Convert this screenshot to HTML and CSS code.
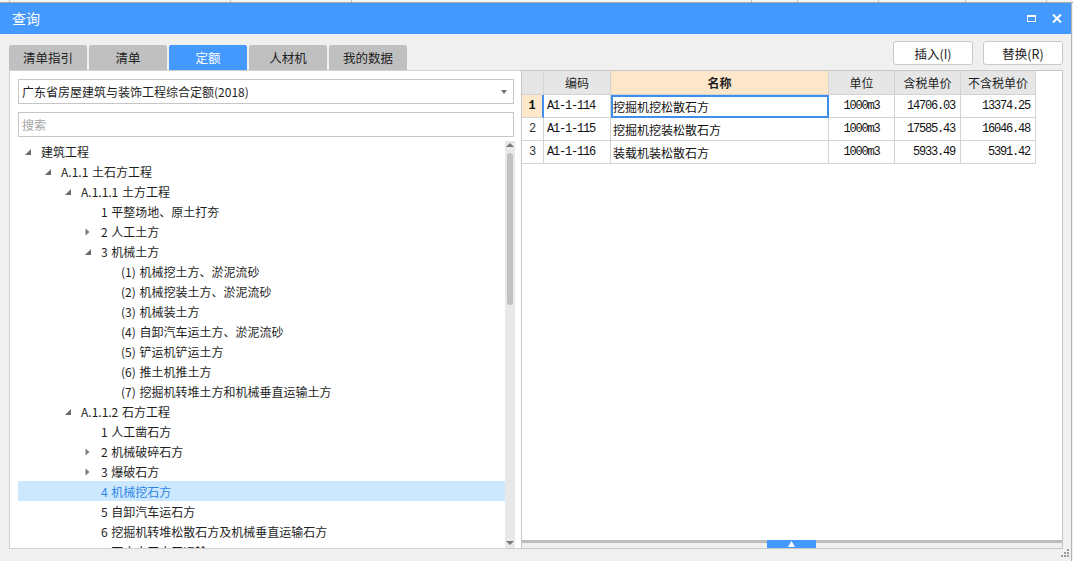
FILE: index.html
```html
<!DOCTYPE html>
<html lang="zh-CN">
<head>
<meta charset="utf-8">
<title>查询</title>
<link rel="stylesheet" href="styles.css">
</head>
<body>
<div class="topstrip">
  <span style="width:10px"></span><span style="width:221px"></span><span style="width:121px"></span><span style="width:400px"></span><span style="width:46px"></span><span style="width:81px"></span><span style="width:87px"></span><span style="width:81px"></span>
</div>
<div class="window">
  <div class="titlebar">
    <div class="title">查询</div>
    <div class="winbtns">
      <span class="maxbtn"></span>
      <svg class="closebtn" width="10" height="9" viewBox="0 0 10 9"><path d="M1 0.5 L9 8.5 M9 0.5 L1 8.5" stroke="#fff" stroke-width="2"/></svg>
    </div>
  </div>
  <div class="toolbar">
    <div class="tabs">
      <div class="tab">清单指引</div>
      <div class="tab">清单</div>
      <div class="tab active">定额</div>
      <div class="tab">人材机</div>
      <div class="tab">我的数据</div>
    </div>
    <div class="actions">
      <div class="btn">插入(I)</div>
      <div class="btn">替换(R)</div>
    </div>
  </div>
  <div class="panes">
    <div class="left">
      <div class="field select"><span class="seltext">广东省房屋建筑与装饰工程综合定额(2018)</span><span class="caret"></span></div>
      <div class="field search">搜索</div>
      <div class="treewrap">
        <div class="tree">
          <div class="row l0"><span class="tw"><svg class="ex" width="6" height="6" viewBox="0 0 6 6"><polygon points="6,0 6,6 0,6" fill="#6a6a6a"/></svg></span><span>建筑工程</span></div>
          <div class="row l1"><span class="tw"><svg class="ex" width="6" height="6" viewBox="0 0 6 6"><polygon points="6,0 6,6 0,6" fill="#6a6a6a"/></svg></span><span>A.1.1 土石方工程</span></div>
          <div class="row l2"><span class="tw"><svg class="ex" width="6" height="6" viewBox="0 0 6 6"><polygon points="6,0 6,6 0,6" fill="#6a6a6a"/></svg></span><span>A.1.1.1 土方工程</span></div>
          <div class="row l3"><span class="tw"></span><span>1 平整场地、原土打夯</span></div>
          <div class="row l3"><span class="tw"><svg class="co" width="5" height="8" viewBox="0 0 5 8"><polygon points="0.5,0.5 4.5,4 0.5,7.5" fill="#7c7c7c"/></svg></span><span>2 人工土方</span></div>
          <div class="row l3"><span class="tw"><svg class="ex" width="6" height="6" viewBox="0 0 6 6"><polygon points="6,0 6,6 0,6" fill="#6a6a6a"/></svg></span><span>3 机械土方</span></div>
          <div class="row l4"><span class="tw"></span><span>(1) 机械挖土方、淤泥流砂</span></div>
          <div class="row l4"><span class="tw"></span><span>(2) 机械挖装土方、淤泥流砂</span></div>
          <div class="row l4"><span class="tw"></span><span>(3) 机械装土方</span></div>
          <div class="row l4"><span class="tw"></span><span>(4) 自卸汽车运土方、淤泥流砂</span></div>
          <div class="row l4"><span class="tw"></span><span>(5) 铲运机铲运土方</span></div>
          <div class="row l4"><span class="tw"></span><span>(6) 推土机推土方</span></div>
          <div class="row l4"><span class="tw"></span><span>(7) 挖掘机转堆土方和机械垂直运输土方</span></div>
          <div class="row l2"><span class="tw"><svg class="ex" width="6" height="6" viewBox="0 0 6 6"><polygon points="6,0 6,6 0,6" fill="#6a6a6a"/></svg></span><span>A.1.1.2 石方工程</span></div>
          <div class="row l3"><span class="tw"></span><span>1 人工凿石方</span></div>
          <div class="row l3"><span class="tw"><svg class="co" width="5" height="8" viewBox="0 0 5 8"><polygon points="0.5,0.5 4.5,4 0.5,7.5" fill="#7c7c7c"/></svg></span><span>2 机械破碎石方</span></div>
          <div class="row l3"><span class="tw"><svg class="co" width="5" height="8" viewBox="0 0 5 8"><polygon points="0.5,0.5 4.5,4 0.5,7.5" fill="#7c7c7c"/></svg></span><span>3 爆破石方</span></div>
          <div class="row l3 sel"><span class="tw"></span><span>4 机械挖石方</span></div>
          <div class="row l3"><span class="tw"></span><span>5 自卸汽车运石方</span></div>
          <div class="row l3"><span class="tw"></span><span>6 挖掘机转堆松散石方及机械垂直运输石方</span></div>
          <div class="row l3"><span class="tw"></span><span>7 石方人工水平运输</span></div>
        </div>
        <div class="vscroll">
          <span class="arr up"></span>
          <span class="thumb"></span>
          <span class="arr down"></span>
        </div>
      </div>
    </div>
    <div class="right">
      <div class="gridarea">
        <div class="grid">
          <div class="c h num"></div>
          <div class="c h">编码</div>
          <div class="c h hl">名称</div>
          <div class="c h">单位</div>
          <div class="c h">含税单价</div>
          <div class="c h">不含税单价</div>

          <div class="c num cur">1</div>
          <div class="c code">A1-1-114</div>
          <div class="c name focus">挖掘机挖松散石方</div>
          <div class="c unit">1000m3</div>
          <div class="c money">14706.03</div>
          <div class="c money">13374.25</div>

          <div class="c num">2</div>
          <div class="c code">A1-1-115</div>
          <div class="c name">挖掘机挖装松散石方</div>
          <div class="c unit">1000m3</div>
          <div class="c money">17585.43</div>
          <div class="c money">16046.48</div>

          <div class="c num">3</div>
          <div class="c code">A1-1-116</div>
          <div class="c name">装载机装松散石方</div>
          <div class="c unit">1000m3</div>
          <div class="c money">5933.49</div>
          <div class="c money">5391.42</div>
        </div>
      </div>
      <div class="hbar">
        <div class="knob"><svg width="7" height="6" viewBox="0 0 7 6"><polygon points="3.5,0 7,6 0,6" fill="#fff"/></svg></div>
      </div>
    </div>
  </div>
  <div class="footer">
    <svg width="9" height="9" viewBox="0 0 9 9" fill="#9a9a9a"><rect x="6" y="0" width="2" height="2"/><rect x="3" y="3" width="2" height="2"/><rect x="6" y="3" width="2" height="2"/><rect x="0" y="6" width="2" height="2"/><rect x="3" y="6" width="2" height="2"/><rect x="6" y="6" width="2" height="2"/></svg>
  </div>
</div>
</body>
</html>
```
FILE: styles.css
```css
* { box-sizing: border-box; }
html, body { margin: 0; padding: 0; }
body {
  width: 1073px;
  height: 561px;
  overflow: hidden;
  background: #f0f0f0;
  font-family: "Noto Sans CJK SC", "Microsoft YaHei", sans-serif;
  font-size: 12px;
  color: #1e1e1e;
}

.topstrip {
  display: flex;
  height: 3px;
  background: #f6f6f6;
  border-bottom: 1px solid #a9a9a9;
}
.topstrip span { height: 2px; border-right: 1px solid #c4c4c4; flex: none; }

.window {
  width: 1072px;
  height: 558px;
  border-right: 1px solid #b4b4b4;
  display: flex;
  flex-direction: column;
}

.titlebar {
  height: 31px;
  flex: none;
  background: #4499ff;
  color: #fff;
  display: flex;
  align-items: center;
  padding: 0 9px 0 12px;
  font-size: 14px;
}
.title { flex: 1; line-height: 31px; }
.winbtns { display: flex; align-items: center; gap: 16px; }
.maxbtn {
  width: 9px;
  height: 7px;
  border: 1px solid #fff;
  border-top-width: 2px;
  display: block;
}
.closebtn { display: block; }

.toolbar {
  height: 36px;
  flex: none;
  display: flex;
  padding: 0 8px 0 9px;
}
.tabs { display: flex; gap: 2px; align-self: flex-end; }
.tab {
  width: 78px;
  height: 25px;
  background: #c0c0c0;
  border-radius: 2px 2px 0 0;
  display: flex;
  align-items: center;
  justify-content: center;
  color: #222;
  font-size: 12.5px;
}
.tab.active { background: #4499ff; color: #fff; }
.actions { margin-left: auto; display: flex; gap: 10px; padding-top: 7px; }
.btn {
  width: 80px;
  height: 24px;
  background: #fff;
  border: 1px solid #c9c9c9;
  border-radius: 3px;
  display: flex;
  align-items: center;
  justify-content: center;
  color: #222;
  font-size: 12.5px;
}

.panes {
  height: 479px;
  flex: none;
  display: flex;
  padding: 0 8px 0 9px;
}

.left {
  width: 512px;
  flex: none;
  background: #fff;
  border: 1px solid #d0d0d0;
  border-right: none;
  padding: 8px 0 0 8px;
  display: flex;
  flex-direction: column;
}
.field {
  width: 496px;
  height: 25px;
  flex: none;
  border: 1px solid #c6c6c6;
  display: flex;
  align-items: center;
  padding: 0 3px;
}
.select { justify-content: space-between; }
.seltext { color: #1e1e1e; }
.caret {
  width: 0;
  height: 0;
  border-left: 3px solid transparent;
  border-right: 3px solid transparent;
  border-top: 4px solid #707070;
  margin-right: 3px;
}
.search { margin-top: 8px; color: #a4a4a4; }

.treewrap {
  margin-top: 4px;
  flex: 1;
  min-height: 0;
  display: flex;
}
.tree { width: 487px; flex: none; overflow: hidden; }
.row {
  height: 20px;
  display: flex;
  align-items: center;
  white-space: nowrap;
  color: #1e1e1e;
  word-spacing: 1px;
}
.row.sel { background: #cce8ff; color: #2f86e8; }
.l0 { padding-left: 6px; }
.l1 { padding-left: 26px; }
.l2 { padding-left: 46px; }
.l3 { padding-left: 66px; }
.l4 { padding-left: 86px; }
.tw {
  width: 17px;
  height: 20px;
  flex: none;
  display: flex;
  align-items: center;
  padding-left: 1px;
}
.tw .ex { margin-top: 2px; }
.tw .co { margin-top: 1px; }

.vscroll {
  width: 10px;
  flex: none;
  background: #e8e8e8;
  display: flex;
  flex-direction: column;
  align-items: center;
}
.arr { width: 0; height: 0; border-left: 4px solid transparent; border-right: 4px solid transparent; }
.arr.up { border-bottom: 4px solid #7a7a7a; margin-top: 2px; }
.thumb {
  width: 6px;
  height: 152px;
  background: #c2c2c2;
  border-radius: 3px;
  margin-top: 6px;
}
.arr.down { border-top: 4px solid #7a7a7a; margin-top: auto; margin-bottom: 3px; }

.right {
  flex: 1;
  background: #fff;
  border: 1px solid #c8c8c8;
  display: flex;
  flex-direction: column;
}
.gridarea { flex: 1; min-height: 0; }
.grid {
  display: grid;
  grid-template-columns: 22px 67px 218px 66px 66px 75px;
  grid-template-rows: 24px 23px 23px 23px;
  width: 514px;
}
.c {
  border-right: 1px solid #d3d3d3;
  border-bottom: 1px solid #d3d3d3;
  display: flex;
  align-items: center;
  white-space: nowrap;
  overflow: hidden;
}
.h {
  background: #e6e6e6;
  justify-content: center;
  color: #1e1e1e;
}
.h.hl { background: #fde7cb; font-weight: bold; }
.num {
  font-family: "Liberation Mono", "DejaVu Sans Mono", monospace;
  font-size: 12px;
  justify-content: center;
  color: #333;
}
.num.cur { background: #fde7cb; font-weight: bold; color: #111; border-right: 2px solid #3d8fe9; }
.code, .unit, .money {
  font-family: "Liberation Mono", "DejaVu Sans Mono", monospace;
  font-size: 12px;
  letter-spacing: -1.2px;
  color: #111;
}
.code { padding-left: 3px; }
.name { padding-left: 2px; color: #111; }
.name.focus { border: none; box-shadow: inset 0 0 0 2px #3d8fe9; }
.unit { justify-content: center; }
.money { justify-content: flex-end; padding-right: 5px; }

.hbar {
  height: 8px;
  flex: none;
  display: flex;
  background: linear-gradient(#bdbdbd 0 3px, #f0f0f0 3px 100%);
}
.knob {
  margin-left: 245px;
  width: 49px;
  height: 8px;
  background: #4499ff;
  display: flex;
  align-items: center;
  justify-content: center;
}
.knob svg { display: block; }

.footer {
  height: 9px;
  flex: none;
  display: flex;
  justify-content: flex-end;
  align-items: flex-end;
  padding-right: 1px;
}
.footer svg { display: block; }
```
